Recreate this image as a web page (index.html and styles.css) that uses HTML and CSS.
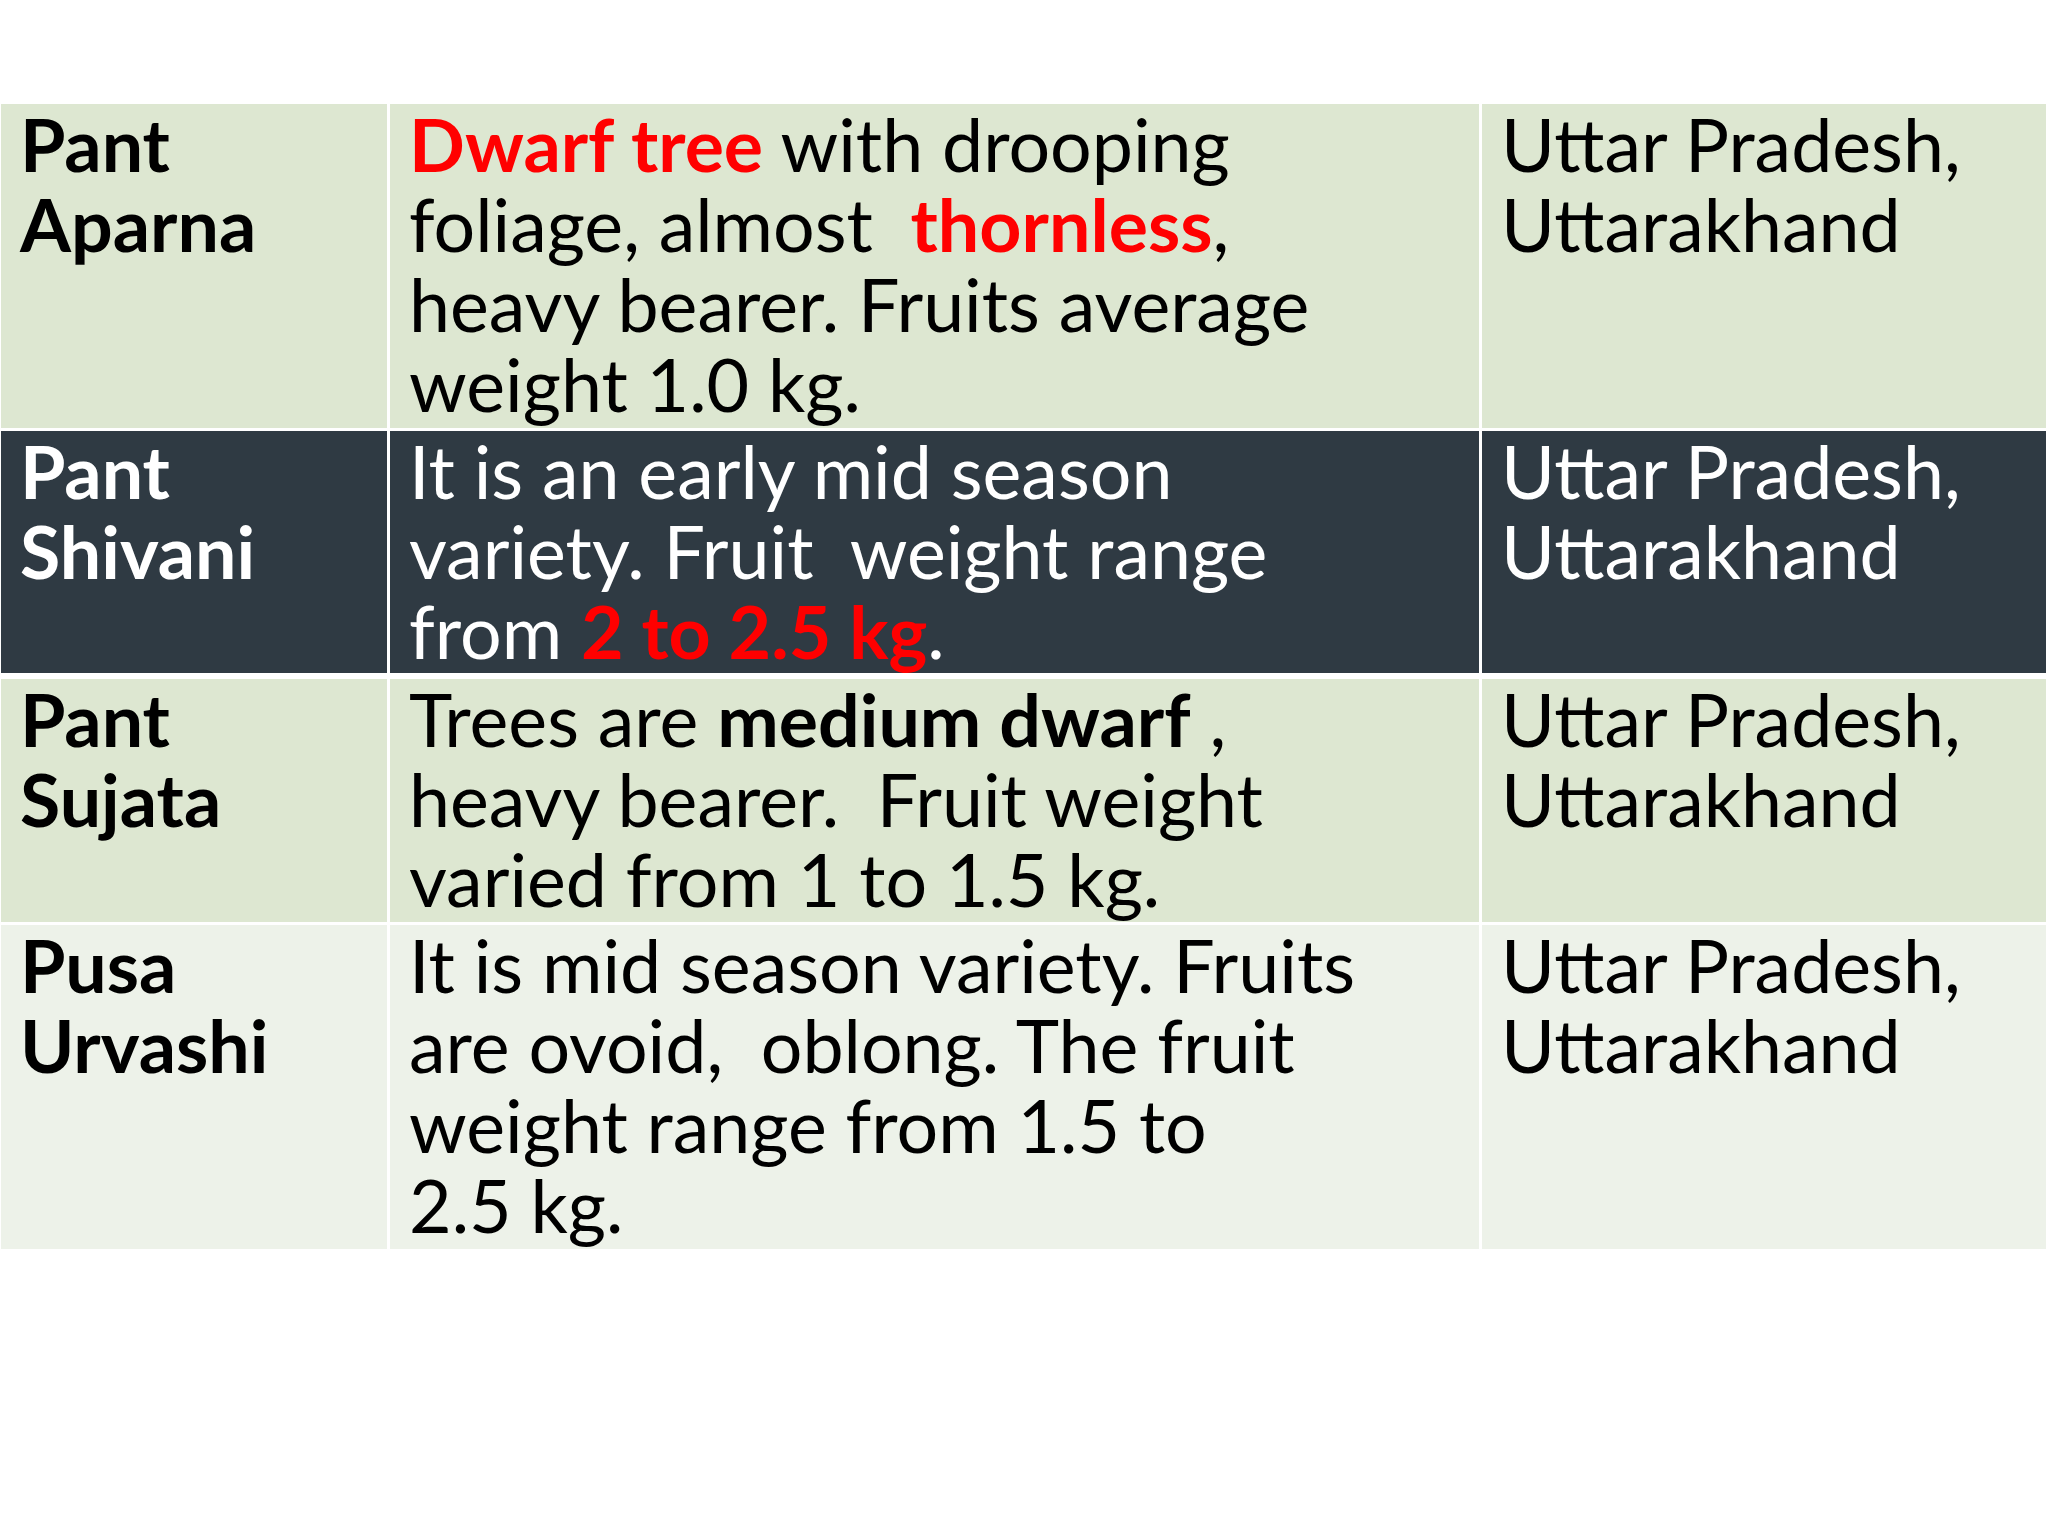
FILE: index.html
```html
<!DOCTYPE html>
<html>
<head>
<meta charset="utf-8">
<link rel="stylesheet" href="styles.css">
</head>
<body>
<div class="slide">
  <div class="table">
    <div class="cell name light">Pant<br>Aparna</div>
    <div class="cell desc light"><span class="red b">Dwarf tree</span> with drooping<br>foliage, almost &nbsp;<span class="red b">thornless</span>,<br>heavy bearer. Fruits average<br>weight 1.0 kg.</div>
    <div class="cell state light">Uttar Pradesh,<br>Uttarakhand</div>

    <div class="cell name dark">Pant<br>Shivani</div>
    <div class="cell desc dark">It is an early mid season<br>variety. Fruit &nbsp;weight range<br>from <span class="red b">2 to 2.5 kg</span>.</div>
    <div class="cell state dark">Uttar Pradesh,<br>Uttarakhand</div>

    <div class="cell name light">Pant<br>Sujata</div>
    <div class="cell desc light">Trees are <span class="b">medium dwarf</span> ,<br>heavy bearer. &nbsp;Fruit weight<br>varied from 1 to 1.5 kg.</div>
    <div class="cell state light">Uttar Pradesh,<br>Uttarakhand</div>

    <div class="cell name pale">Pusa<br>Urvashi</div>
    <div class="cell desc pale">It is mid season variety. Fruits<br>are ovoid, &nbsp;oblong. The fruit<br>weight range from 1.5 to<br>2.5 kg.</div>
    <div class="cell state pale">Uttar Pradesh,<br>Uttarakhand</div>
  </div>
</div>
</body>
</html>
```
FILE: styles.css
```css
html, body {
  margin: 0;
  padding: 0;
  background: #ffffff;
}
.slide {
  width: 2048px;
  height: 1536px;
  padding-top: 104px;
  box-sizing: border-box;
}
.table {
  display: grid;
  grid-template-columns: 386px 1089px 564px;
  grid-template-rows: 324px 245px 243px 324px;
  column-gap: 3px;
  row-gap: 3px;
  width: 2045px;
  margin-left: 1px;
  font-family: Lato, "Liberation Sans", sans-serif;
  font-size: 73.5px;
  line-height: 80px;
  color: #000;
}
.cell {
  padding: 0 18px 0 19px;
  white-space: nowrap;
}
.name {
  font-weight: 700;
}
.b {
  font-weight: 700;
}
.red {
  color: #ff0000;
}
.light {
  background: #dde7d1;
}
.dark {
  background: #2f3a43;
  color: #ffffff;
  height: 242px;
}
.pale {
  background: #edf2e9;
}
```
